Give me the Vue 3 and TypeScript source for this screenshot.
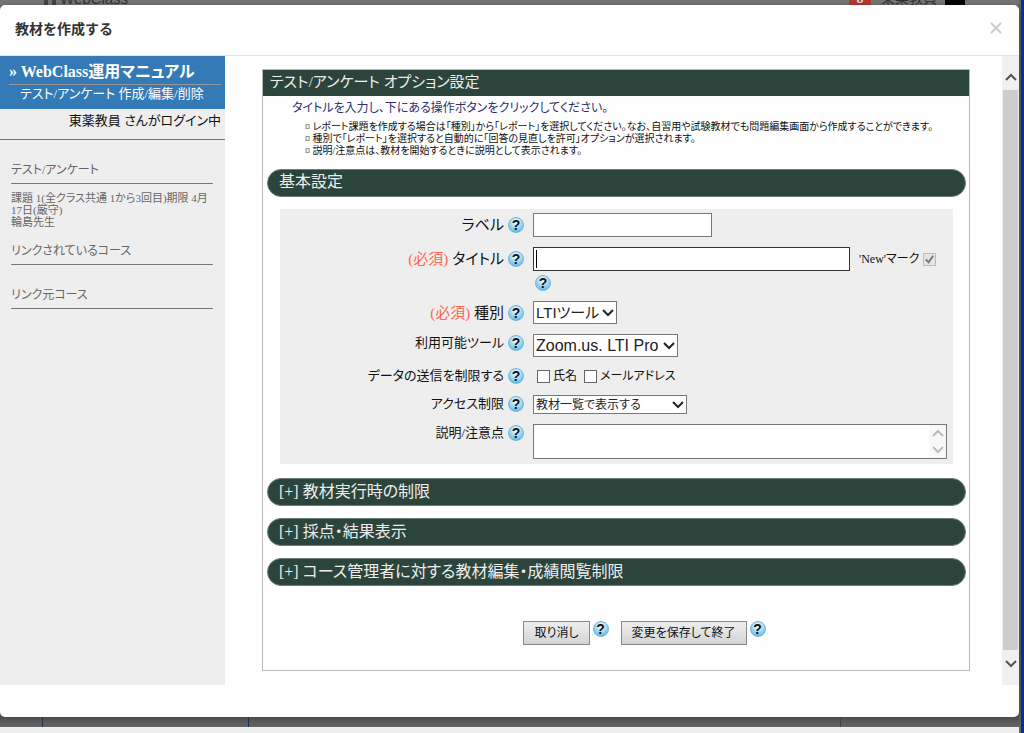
<script setup lang="ts">
import { ref } from 'vue'

const label = ref('')
const title = ref('')
const kind = ref('lti')
const tool = ref('zoom')
const access = ref('list')
const note = ref('')
const sendName = ref(false)
const sendMail = ref(false)

const notes: string[] = [
  'レポート課題を作成する場合は「種別」から「レポート」を選択してください。なお、自習用や試験教材でも問題編集画面から作成することができます。',
  '種別で「レポート」を選択すると自動的に「回答の見直しを許可」オプションが選択されます。',
  '説明/注意点は、教材を開始するときに説明として表示されます。',
]
const folded: string[] = ['教材実行時の制限', '採点・結果表示', 'コース管理者に対する教材編集・成績閲覧制限']
</script>

<template>
  <div class="screen">
    <div class="backdrop">
      <div class="topbar" aria-hidden="true">
        <span class="brand"><i></i><i></i>WebClass</span>
        <span class="who"><b class="badge">8</b><span>東薬教員</span><i class="hat"></i></span>
      </div>

      <section class="dialog" role="dialog" aria-labelledby="dlg-title">
        <header class="dlg-head">
          <h1 id="dlg-title">教材を作成する</h1>
          <button class="close" type="button" aria-label="閉じる">
            <svg viewBox="0 0 12 12"><path d="M1 1L11 11M11 1L1 11" /></svg>
          </button>
        </header>

        <div class="dlg-body">
          <aside class="side">
            <div class="crumb">
              <a class="course" href="#">» WebClass運用マニュアル</a>
              <a class="sub" href="#">テスト/アンケート 作成/編集/削除</a>
            </div>
            <p class="login">東薬教員 さんがログイン中</p>
            <div class="side-list">
              <h2>テスト/アンケート</h2>
              <p>課題 1(全クラス共通 1から3回目)期限 4月17日(厳守)<br />輪島先生</p>
              <h2>リンクされているコース</h2>
              <h2 class="last">リンク元コース</h2>
            </div>
          </aside>

          <main class="main">
            <form class="box" @submit.prevent>
              <h2 class="box-title">テスト/アンケート オプション設定</h2>
              <p class="lead">タイトルを入力し、下にある操作ボタンをクリックしてください。</p>
              <ul class="notes">
                <li v-for="n in notes" :key="n">{{ n }}</li>
              </ul>

              <h3 class="pill">基本設定</h3>
              <div class="fields">
                <div class="lab big"><label for="f-label">ラベル</label><button class="help" type="button">?</button></div>
                <div class="val"><input id="f-label" v-model="label" class="text short" type="text" /></div>

                <div class="lab big"><label for="f-title"><em>(必須)</em> タイトル</label><button class="help" type="button">?</button></div>
                <div class="val title-cell">
                  <div class="title-row">
                    <span class="caret-box"><input id="f-title" v-model="title" class="text active" type="text" /></span>
                    <label class="new">'New'マーク<span class="check off"><input type="checkbox" checked disabled /><svg viewBox="0 0 12 12"><path d="M2 6L5 9L10 2" /></svg></span></label>
                  </div>
                  <button class="help under" type="button">?</button>
                </div>

                <div class="lab big"><label for="f-kind"><em>(必須)</em> 種別</label><button class="help" type="button">?</button></div>
                <div class="val">
                  <span class="pick kind"><select id="f-kind" v-model="kind"><option value="lti">LTIツール</option></select><svg viewBox="0 0 12 8"><path d="M1 1L6 6L11 1" /></svg></span>
                </div>

                <div class="lab"><label for="f-tool">利用可能ツール</label><button class="help" type="button">?</button></div>
                <div class="val">
                  <span class="pick tool"><select id="f-tool" v-model="tool"><option value="zoom">Zoom.us. LTI Pro</option></select><svg viewBox="0 0 12 8"><path d="M1 1L6 6L11 1" /></svg></span>
                </div>

                <div class="lab"><span>データの送信を制限する</span><button class="help" type="button">?</button></div>
                <div class="val checks">
                  <label><span class="check"><input v-model="sendName" type="checkbox" /></span>氏名</label>
                  <label><span class="check"><input v-model="sendMail" type="checkbox" /></span>メールアドレス</label>
                </div>

                <div class="lab"><label for="f-access">アクセス制限</label><button class="help" type="button">?</button></div>
                <div class="val">
                  <span class="pick access"><select id="f-access" v-model="access"><option value="list">教材一覧で表示する</option></select><svg viewBox="0 0 12 8"><path d="M1 1L6 6L11 1" /></svg></span>
                </div>

                <div class="lab"><label for="f-note">説明/注意点</label><button class="help" type="button">?</button></div>
                <div class="val area">
                  <textarea id="f-note" v-model="note"></textarea>
                  <span class="area-bar" aria-hidden="true">
                    <svg viewBox="0 0 12 8"><path d="M1 7L6 2L11 7" /></svg>
                    <svg viewBox="0 0 12 8"><path d="M1 1L6 6L11 1" /></svg>
                  </span>
                </div>
              </div>

              <button v-for="f in folded" :key="f" class="pill" type="button">[+] {{ f }}</button>

              <div class="actions">
                <button class="btn" type="button">取り消し</button><button class="help" type="button">?</button>
                <button class="btn save" type="submit">変更を保存して終了</button><button class="help" type="button">?</button>
              </div>
            </form>
          </main>

          <div class="scroll" aria-hidden="true">
            <svg viewBox="0 0 12 8"><path d="M1 7L6 2L11 7" /></svg>
            <span class="thumb"></span>
            <svg viewBox="0 0 12 8"><path d="M1 1L6 6L11 1" /></svg>
          </div>
        </div>
      </section>

      <div class="below" aria-hidden="true"><i></i><i></i><i></i></div>
      <div class="status" aria-hidden="true"></div>
    </div>
    <div class="edge"></div>
  </div>
</template>

<style>
body {
  margin: 0;
  background: #666;
}
</style>

<style scoped>
* {
  box-sizing: border-box;
}
.screen {
  display: flex;
  min-height: 100vh;
  font: 13px/16px "Liberation Serif", "Noto Sans CJK JP", sans-serif;
  font-feature-settings: "palt";
  color: #111;
  background: #666;
}
h1, h2, h3, p, ul {
  margin: 0;
  padding: 0;
  font-weight: 400;
}
button, input, select, textarea {
  font: inherit;
  font-feature-settings: inherit;
  color: inherit;
  margin: 0;
  border-radius: 0;
}
svg {
  display: block;
  fill: none;
  stroke: currentColor;
}
.backdrop {
  flex: 1;
  min-width: 0;
  display: flex;
  flex-direction: column;
}
.edge {
  width: 3px;
  margin-left: 2px;
  background: #062f9c;
}
.topbar {
  height: 5px;
  flex: none;
  overflow: hidden;
  display: flex;
  justify-content: space-between;
  align-items: flex-end;
  padding: 0 54px 0 44px;
  background: #777;
  color: #333;
  font-size: 15px;
  line-height: 12px;
}
.brand, .who {
  display: flex;
  align-items: flex-end;
}
.brand {
  font-family: "Liberation Sans", sans-serif;
}
.brand i {
  width: 4px;
  height: 12px;
  margin-right: 4px;
  background: #444;
}
.who {
  font-size: 14px;
}
.badge {
  width: 22px;
  height: 12px;
  margin-right: 10px;
  background: #b3392f;
  color: #ddd;
  text-align: center;
}
.hat {
  width: 20px;
  height: 12px;
  margin-left: 8px;
  background: #050505;
}
.dialog {
  flex: 1;
  display: flex;
  flex-direction: column;
  padding-bottom: 32px;
  background: #fefefe;
  border-radius: 5px;
  box-shadow: 0 3px 9px rgba(0, 0, 0, 0.5);
}
.dlg-head {
  display: flex;
  justify-content: space-between;
  align-items: center;
  height: 51px;
  padding: 0 17px 4px 15px;
  border-bottom: 1px solid #e5e5e5;
}
.dlg-head h1 {
  font: 700 14px/20px "Noto Sans CJK JP", sans-serif;
  color: #333;
}
.close {
  padding: 0;
  border: 0;
  background: none;
  color: #ccc;
}
.close svg {
  width: 12px;
  height: 12px;
  stroke-width: 2;
}
.dlg-body {
  flex: 1;
  display: flex;
}
.side {
  flex: none;
  width: 225px;
  background: #eee;
  color: #666;
}
.crumb {
  height: 53px;
  padding: 4px 4px 0 9px;
  background: #337ab7;
  color: #fff;
}
.crumb a {
  display: block;
  color: inherit;
  text-decoration: none;
  white-space: nowrap;
}
.course {
  font-size: 16px;
  font-weight: 700;
  line-height: 24px;
  border-bottom: 1px solid #999;
}
.sub {
  padding-left: 11px;
  line-height: 18px;
}
.login {
  height: 31px;
  padding: 2px 4px 0 0;
  line-height: 20px;
  text-align: right;
  color: #111;
  border-bottom: 1px solid #777;
}
.side-list {
  padding: 20px 12px 0 11px;
}
.side-list h2 {
  font-size: 12px;
  line-height: 20px;
  padding-bottom: 3px;
  border-bottom: 1px solid #777;
}
.side-list h2.last {
  margin-top: 20px;
}
.side-list p {
  padding: 8px 0 13px;
  font-size: 11px;
  line-height: 12px;
}
.main {
  flex: 1;
  min-width: 0;
  padding: 13px 32px 14px 37px;
}
.box {
  height: 100%;
  padding: 0 3px 0 4px;
  border: 1px solid #bbb;
}
.box-title {
  margin: 0 -3px 0 -4px;
  padding: 0 0 2px 7px;
  font-size: 15px;
  line-height: 24px;
  color: #eee;
  background: #2c453c;
}
.lead {
  padding: 2px 0 0 25px;
  font-size: 12px;
  line-height: 20px;
  color: #2e2e70;
}
.notes {
  padding: 3px 0 0 38px;
  list-style: none;
  font-size: 10px;
  line-height: 12px;
  white-space: nowrap;
}
.notes li::before {
  content: "¤ ";
}
.pill {
  display: block;
  width: 100%;
  height: 28px;
  margin: 12px 0;
  padding: 0 11px;
  border: 1px solid #6d7f78;
  border-radius: 14px;
  font-size: 16px;
  line-height: 24px;
  text-align: left;
  color: #eee;
  background: #2c453c;
}
.fields {
  display: grid;
  grid-template-columns: 244px 1fr;
  gap: 10px 9px;
  margin: 0 13px 14px 13px;
  padding: 4px 6px 5px 0;
  background: #eee;
}
.lab {
  display: flex;
  justify-content: flex-end;
  align-items: center;
  align-self: start;
  gap: 4px;
  height: 18px;
}
.lab.big {
  height: 23px;
  font-size: 15px;
}
.lab em {
  font-style: normal;
  color: #ff6650;
}
.help {
  flex: none;
  width: 16px;
  height: 16px;
  padding: 0;
  border: 1px solid #77b4d6;
  border-radius: 50%;
  background: radial-gradient(circle at 50% 30%, #d8eefa 20%, #7fcbf0 65%, #3ba9dc 100%);
  color: #111;
  font: 900 14px/14px "Liberation Sans", sans-serif;
  text-align: center;
}
.help.under {
  margin-left: 2px;
}
.val {
  display: flex;
  align-items: center;
}
.text {
  height: 24px;
  padding: 0 4px;
  border: 1px solid #777;
  background: #fff;
}
.short {
  width: 179px;
}
.title-cell {
  flex-direction: column;
  align-items: flex-start;
  gap: 4px;
}
.title-row {
  display: flex;
  align-items: center;
  gap: 9px;
  width: 100%;
}
.caret-box {
  position: relative;
  flex: 0 1 317px;
  display: flex;
}
.caret-box::after {
  content: "";
  position: absolute;
  left: 3px;
  top: 3px;
  width: 1px;
  height: 18px;
  background: #000;
}
.active {
  width: 100%;
  border-color: #333;
}
.new {
  display: flex;
  align-items: center;
  gap: 4px;
  font-size: 12px;
  white-space: nowrap;
}
.check {
  position: relative;
  display: flex;
}
.check input {
  appearance: none;
  width: 13px;
  height: 13px;
  border: 1px solid #666;
  background: #fff;
}
.check.off input {
  border-color: #bbb;
  background: #e4e4e4;
}
.check svg {
  position: absolute;
  inset: 1px;
  stroke: #777;
  stroke-width: 2;
}
.pick {
  position: relative;
  display: flex;
}
.pick select {
  appearance: none;
  width: 100%;
  padding: 0 2px;
  border: 1px solid #777;
  background: #fff;
  font-family: "Liberation Sans", "Noto Sans CJK JP", sans-serif;
  color: #222;
}
.pick svg {
  position: absolute;
  right: 3px;
  top: 50%;
  width: 12px;
  height: 8px;
  margin-top: -4px;
  stroke: #222;
  stroke-width: 2;
  pointer-events: none;
}
.kind {
  width: 84px;
}
.tool {
  width: 145px;
}
.kind select, .tool select {
  height: 23px;
  font-size: 16px;
}
.kind select {
  font-size: 15px;
}
.access {
  width: 154px;
}
.access select {
  height: 19px;
  font-size: 12px;
}
.checks {
  gap: 7px;
  height: 18px;
  padding-left: 4px;
  font-size: 12px;
}
.checks label {
  display: flex;
  align-items: center;
  gap: 3px;
}
.area {
  position: relative;
}
textarea {
  display: block;
  width: 100%;
  height: 35px;
  resize: none;
  border: 1px solid #777;
  background: #fff;
  overflow: hidden;
}
.area-bar {
  position: absolute;
  inset: 1px 1px 1px auto;
  width: 17px;
  display: flex;
  flex-direction: column;
  align-items: center;
  justify-content: space-around;
  color: #bbb;
  background: #f8f8f8;
}
.area-bar svg, .scroll svg {
  width: 12px;
  height: 8px;
  stroke-width: 2;
}
.actions {
  display: flex;
  justify-content: center;
  align-items: flex-start;
  gap: 3px;
  padding: 23px 0 24px 56px;
}
.btn {
  height: 24px;
  padding: 0 10px;
  border: 1px solid #888;
  background: linear-gradient(#eee, #d4d4d4);
  font-size: 12px;
  white-space: nowrap;
}
.btn.save {
  margin-left: 9px;
}
.scroll {
  flex: none;
  width: 17px;
  display: flex;
  flex-direction: column;
  align-items: center;
  padding: 17px 0;
  background: #f0f0f0;
  color: #555;
}
.thumb {
  flex: 1;
  width: 15px;
  margin: 9px 0 10px;
  background: #cdcdcd;
}
.below {
  flex: none;
  display: flex;
  height: 10px;
  padding-left: 42px;
  overflow: hidden;
  background: linear-gradient(#4c4c4c, #666);
}
.below i {
  flex: none;
  width: 1px;
  margin-right: 205px;
  background: #17324a;
}
.below i:last-child {
  margin: 0 0 0 386px;
  background: #444;
}
.status {
  flex: none;
  height: 6px;
  background: #eee;
}
</style>
